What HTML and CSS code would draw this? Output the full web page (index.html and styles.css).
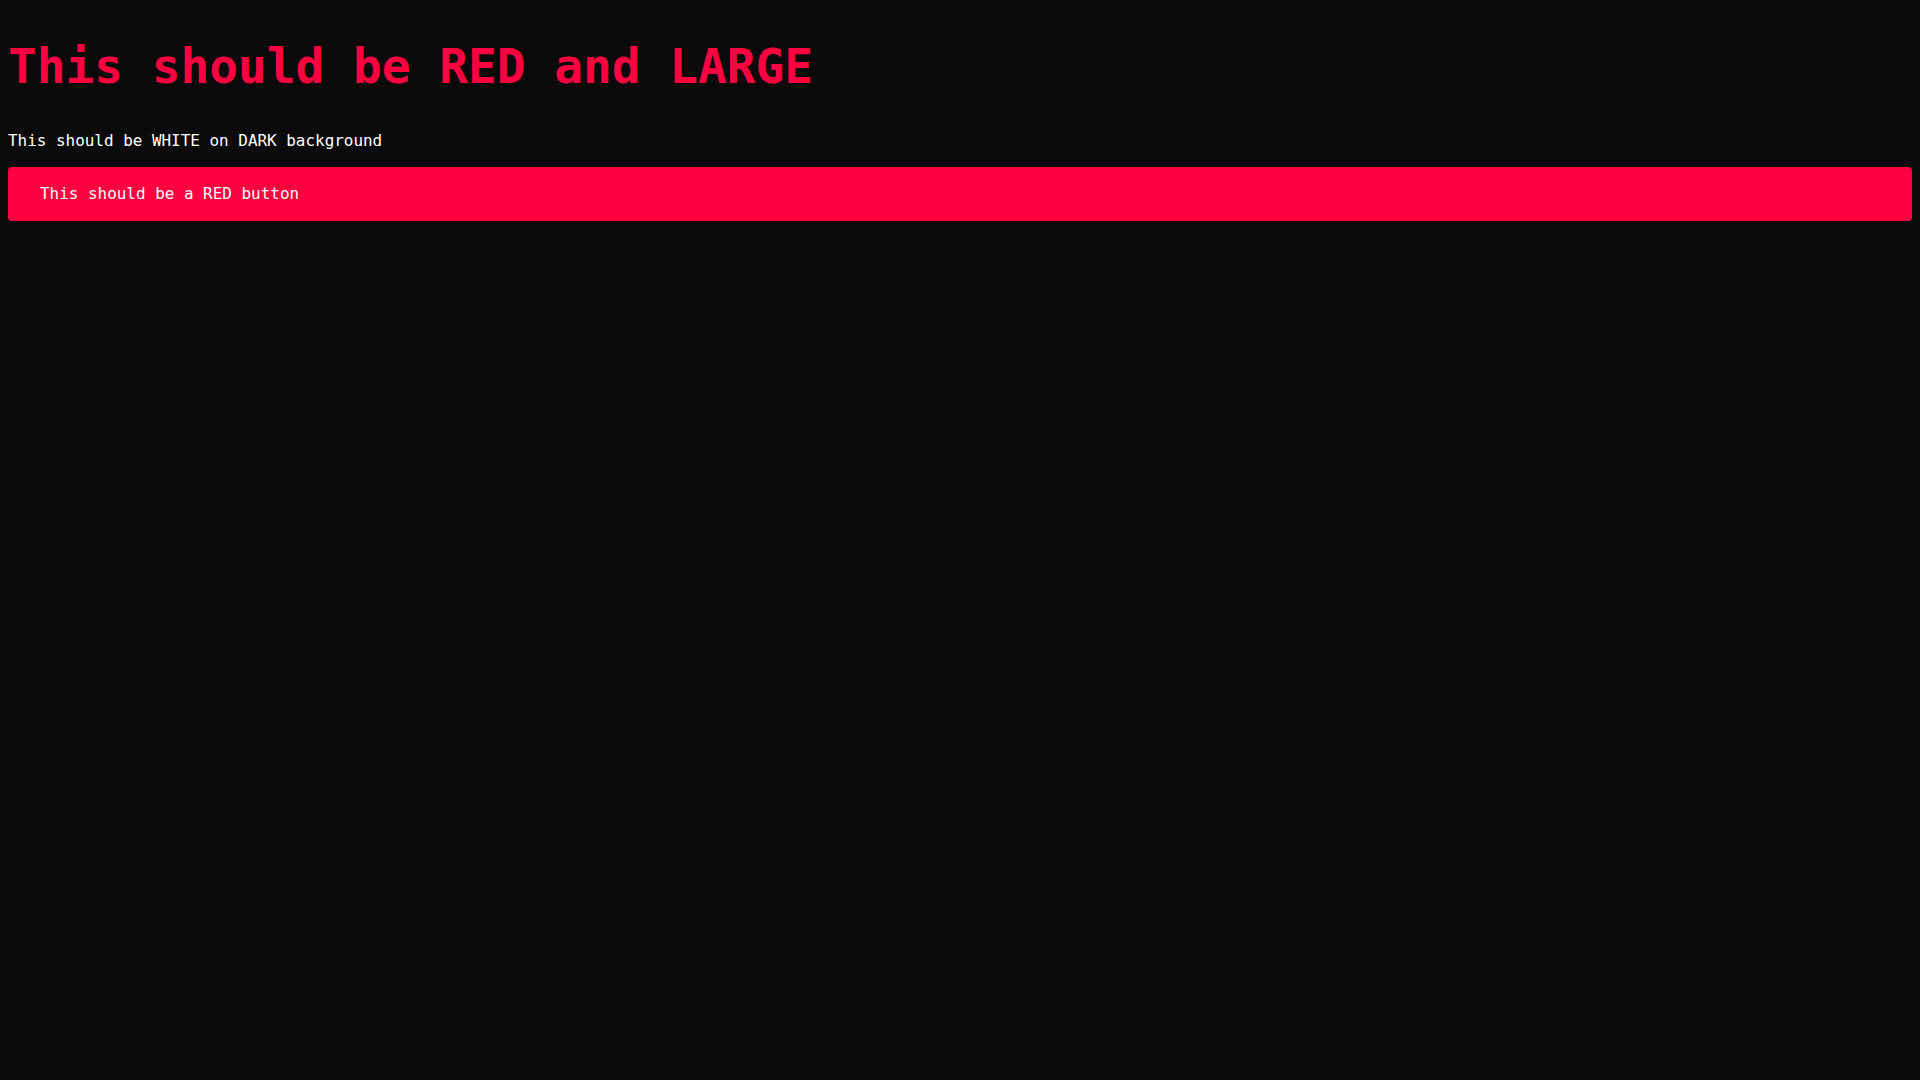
FILE: index.html
```html
<!DOCTYPE html>
<html lang="en">
<head>
<meta charset="utf-8">
<title>Test</title>
<link rel="stylesheet" href="styles.css">
</head>
<body class="page">
  <h1 class="title">This should be RED and LARGE</h1>
  <p class="text">This should be WHITE on DARK background</p>
  <button class="btn" type="button">This should be a RED button</button>
</body>
</html>
```
FILE: styles.css
```css
html, body {
  background: #0a0a0a;
}
.page {
  margin: 0;
  padding: 8px;
  color: #ffffff;
  font-family: "DejaVu Sans Mono", "Liberation Mono", monospace;
  font-size: 15.95px;
  line-height: 24px;
}
.title {
  margin: 30px 0 0;
  font-size: 47.75px;
  line-height: 57.6px;
  font-weight: bold;
  color: #ff0040;
}
.text {
  margin: 33.5px 0 0;
}
.btn {
  display: block;
  width: 100%;
  margin: 13.5px 0 0;
  padding: 15px 32px;
  border: none;
  border-radius: 4px;
  background: #ff0040;
  color: #ffffff;
  font-family: inherit;
  font-size: 15.95px;
  line-height: 24px;
  text-align: left;
  cursor: pointer;
}
```
